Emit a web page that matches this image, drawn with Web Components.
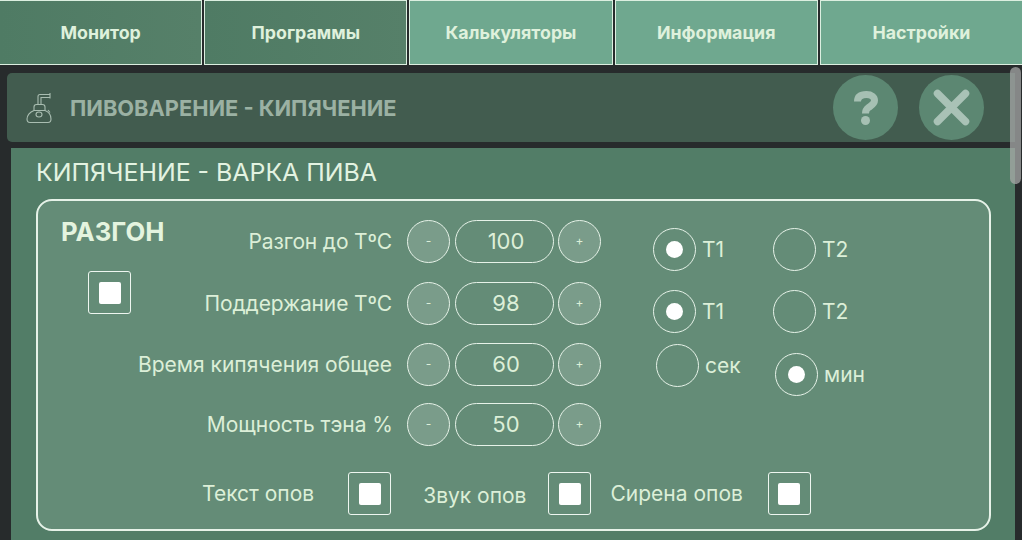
<!DOCTYPE html>
<html lang="ru">
<head>
<meta charset="utf-8">
<title>Кипячение</title>
<style>
  html, body { margin: 0; height: 100%; overflow: hidden; background: #272b2c; }
  body { font-family: Inter, "Liberation Sans", sans-serif; color: #dcefd8; }
  main-screen { width: 1022px; height: 540px; }
</style>
</head>
<body>

<main-screen>
  <tab-bar>
    <nav-tab>Монитор</nav-tab>
    <nav-tab>Программы</nav-tab>
    <nav-tab light>Калькуляторы</nav-tab>
    <nav-tab light>Информация</nav-tab>
    <nav-tab light>Настройки</nav-tab>
  </tab-bar>
  <title-bar>ПИВОВАРЕНИЕ - КИПЯЧЕНИЕ</title-bar>
  <boil-panel heading="КИПЯЧЕНИЕ - ВАРКА ПИВА">
    <boil-box title="РАЗГОН">
      <step-row slot="rows" style="--lbl-ls:-.15px" label="Разгон до ТºС" value="100"></step-row>
      <step-row slot="rows" style="margin-top:19px;--lbl-ls:-.13px" label="Поддержание ТºС" value="98"></step-row>
      <step-row slot="rows" style="margin-top:18px" label="Время кипячения общее" value="60"></step-row>
      <step-row slot="rows" style="margin-top:17px;--lbl-gap:14px" label="Мощность тэна %" value="50"></step-row>

      <radio-pair slot="radios" a="Т1" b="Т2" checked="a" top="8"></radio-pair>
      <radio-pair slot="radios" a="Т1" b="Т2" checked="a" top="19"></radio-pair>
      <radio-pair slot="radios" a="сек" b="мин" checked="b" top="11" unit></radio-pair>

      <alert-check slot="alerts" style="margin-left:141px" label="Текст опов" gap="34"></alert-check>
      <alert-check slot="alerts" style="margin-left:32px" label="Звук опов" gap="22" drop></alert-check>
      <alert-check slot="alerts" style="margin-left:19px" label="Сирена опов" gap="25"></alert-check>
    </boil-box>
  </boil-panel>
  <fake-scroll></fake-scroll>
</main-screen>

<script>
/* tiny helper so each class only carries its own markup */
class Base extends HTMLElement {
  constructor() {
    super();
    this._shadow = this.attachShadow({ mode: 'open' });
  }
  connectedCallback() {
    this._shadow.innerHTML = this.markup();
  }
}

class MainScreen extends Base {
  markup() {
    return `<style>
      :host { display: flex; flex-direction: column; position: relative; overflow: hidden; }
    </style><slot></slot>`;
  }
}

class TabBar extends Base {
  markup() {
    return `<style>
      :host { display: flex; gap: 2px; margin: 0 -1px; height: 65px; flex: none; }
    </style><slot></slot>`;
  }
}

class NavTab extends Base {
  markup() {
    return `<style>
      :host {
        flex: 1 1 0;
        display: flex; align-items: center; justify-content: center;
        box-sizing: border-box;
        border: 1px solid #dcefe0;
        background: linear-gradient(90deg, #4f7b64, #568069);
        color: #dff1dc;
        font-size: 17.800px; font-weight: 700;
      }
      :host([light]) { background: #6fa88f; }
    </style><slot></slot>`;
  }
}

class TitleBar extends Base {
  markup() {
    return `<style>
      :host {
        display: flex; align-items: center; flex: none;
        height: 69px; margin: 8px 7px 0 7px;
        border-radius: 5px 0 0 5px;
        background: #425c4f;
        color: #9bb1a3;
        font-size: 21.800px; font-weight: 700;
      }
      .ico { width: 28px; height: 32px; margin: 0 17px 0 18px; flex: none; }
      .txt { flex: 1; }
      .btn {
        width: 65px; height: 65px; border-radius: 50%; background: #5c8772;
        display: flex; align-items: center; justify-content: center; flex: none;
      }
      .help { margin-right: 21px; }
      .close { margin-right: 31px; }
    </style>
    <svg class="ico" viewBox="0 0 28 32" fill="none" stroke="#a9bdb1" stroke-width="1.1">
      <path d="M25 2.500H15Q13 2.500 13 4.500V12.500"/>
      <path d="M25 1V6.500M25 5.500H16V12.500"/>
      <path d="M9 18.500V15Q9 12.500 11.500 12.500H17.500Q20 12.500 20 15V18.500"/>
      <path d="M9 18.500C4.500 20 2 24 2 27Q2 30.500 5 30.500H23Q26 30.500 26 27C26 23 24 20 20 18.500Z"/>
      <path d="M23 18L25 20.500"/>
      <ellipse cx="14" cy="22.500" rx="3" ry="2.500"/>
    </svg>
    <span class="txt"><slot></slot></span>
    <span class="btn help">
      <svg width="24" height="34" viewBox="0 0 24 34" fill="none">
        <path d="M3.500 10.500C3.500 5.500 7 3.500 12.500 3.500C17.500 3.500 20.500 6 20.500 9.500C20.500 13 17 14.500 14.500 16.500C12 18.300 11.500 19.500 11.500 22.500" stroke="#a6c0b3" stroke-width="7"/>
        <circle cx="11.500" cy="29.500" r="4.500" fill="#a6c0b3"/>
      </svg>
    </span>
    <span class="btn close">
      <svg width="37" height="37" viewBox="0 0 37 37" stroke="#a9c2b6" stroke-width="7.500" stroke-linecap="round">
        <path d="M4.500 4.500L32.500 32.500M32.500 4.500L4.500 32.500"/>
      </svg>
    </span>`;
  }
}

class BoilPanel extends Base {
  markup() {
    return `<style>
      :host {
        display: block; flex: 1;
        margin: 6px 7px 0 11px;
        padding: 10px 24px 0 25px;
        background: #527d67;
      }
      h2 {
        margin: 0 0 13px 0;
        font-size: 24.900px; line-height: 28px; font-weight: 400;
        color: #e3f3e1;
      }
    </style>
    <h2>${this.getAttribute('heading')}</h2>
    <slot></slot>`;
  }
}

class BoilBox extends Base {
  markup() {
    return `<style>
      :host {
        display: block; box-sizing: border-box;
        height: 332px;
        padding: 19px 23px 0 23px;
        border: 2px solid #e6f2e8; border-radius: 16px;
        background: #648c77;
      }
      .top { display: flex; height: 252px; }
      .left { width: 75px; flex: none; }
      h3 { margin: -1px 0 0; font-size: 25.700px; line-height: 26px; font-weight: 700; color: #e4f4df; white-space: nowrap; }
      box-check { margin: 26px 0 0 27px; }
      .rows { width: 465px; flex: none; }
      .radios { display: flex; flex-direction: column; margin-left: 52px; }
      .alerts { display: flex; align-items: center; }
    </style>
    <div class="top">
      <div class="left">
        <h3>${this.getAttribute('title')}</h3>
        <box-check></box-check>
      </div>
      <div class="rows"><slot name="rows"></slot></div>
      <div class="radios"><slot name="radios"></slot></div>
    </div>
    <div class="alerts"><slot name="alerts"></slot></div>`;
  }
}

class StepRow extends Base {
  markup() {
    return `<style>
      :host { display: flex; align-items: center; justify-content: flex-end; height: 43px; font-size: 21px; color: #dcefd8; }
      .lbl { margin-right: var(--lbl-gap, 15px); letter-spacing: var(--lbl-ls, 0); white-space: nowrap; }
      .rnd, .val {
        box-sizing: border-box; height: 43px;
        border: 1.500px solid #e6f2e8; border-radius: 22px;
        display: flex; align-items: center; justify-content: center;
      }
      .rnd { width: 43px; background: #7a9c8a; font-size: 12px; padding-bottom: 2px; }
      .val { width: 99px; margin: 0 4px 0 5px; padding: 0 0 2px 3px; font-size: 22px; }
    </style>
    <span class="lbl">${this.getAttribute('label')}</span>
    <span class="rnd">-</span>
    <span class="val">${this.getAttribute('value')}</span>
    <span class="rnd">+</span>`;
  }
}

class RadioPair extends Base {
  markup() {
    const checked = this.getAttribute('checked');
    return `<style>
      :host { display: flex; align-items: flex-start; height: 43px; margin-top: ${this.getAttribute('top')}px; font-size: 21px; color: #dcefd8; }
      .opt { display: flex; align-items: center; gap: 6px; }
      .a { width: 120px; }
      :host([unit]) .a { margin-left: 3px; width: 119px; }
      :host([unit]) .b { margin-top: 9px; }
      .dot {
        box-sizing: border-box; width: 43px; height: 43px;
        border: 1.500px solid #e6f2e8; border-radius: 50%;
        display: flex; align-items: center; justify-content: center; flex: none;
      }
      .on::after { content: ''; width: 17px; height: 17px; border-radius: 50%; background: #fff; }
    </style>
    <span class="opt a"><span class="dot ${checked === 'a' ? 'on' : ''}"></span>${this.getAttribute('a')}</span>
    <span class="opt b"><span class="dot ${checked === 'b' ? 'on' : ''}"></span>${this.getAttribute('b')}</span>`;
  }
}

class BoxCheck extends Base {
  markup() {
    return `<style>
      :host {
        display: flex; align-items: center; justify-content: center;
        box-sizing: border-box; width: 43px; height: 43px; flex: none;
        border: 1px solid #eef6f0; border-radius: 3px;
      }
      i { width: 22px; height: 22px; border-radius: 2px; background: #fff; }
    </style><i></i>`;
  }
}

class AlertCheck extends Base {
  markup() {
    return `<style>
      :host { display: flex; align-items: center; font-size: 21px; color: #dcefd8; }
      :host([drop]) span { margin-top: 4px; }
      box-check { margin-left: ${this.getAttribute('gap')}px; }
    </style>
    <span>${this.getAttribute('label')}</span><box-check></box-check>`;
  }
}

/* overlay scrollbar thumb, sits over the page edge */
class FakeScroll extends Base {
  markup() {
    return `<style>
      :host {
        position: absolute; left: 1010px; top: 67px;
        width: 11px; height: 117px; border-radius: 6px;
        background: rgba(170,170,170,.72);
      }
    </style>`;
  }
}

customElements.define('main-screen', MainScreen);
customElements.define('tab-bar', TabBar);
customElements.define('nav-tab', NavTab);
customElements.define('title-bar', TitleBar);
customElements.define('boil-panel', BoilPanel);
customElements.define('boil-box', BoilBox);
customElements.define('step-row', StepRow);
customElements.define('radio-pair', RadioPair);
customElements.define('box-check', BoxCheck);
customElements.define('alert-check', AlertCheck);
customElements.define('fake-scroll', FakeScroll);
</script>
</body>
</html>
